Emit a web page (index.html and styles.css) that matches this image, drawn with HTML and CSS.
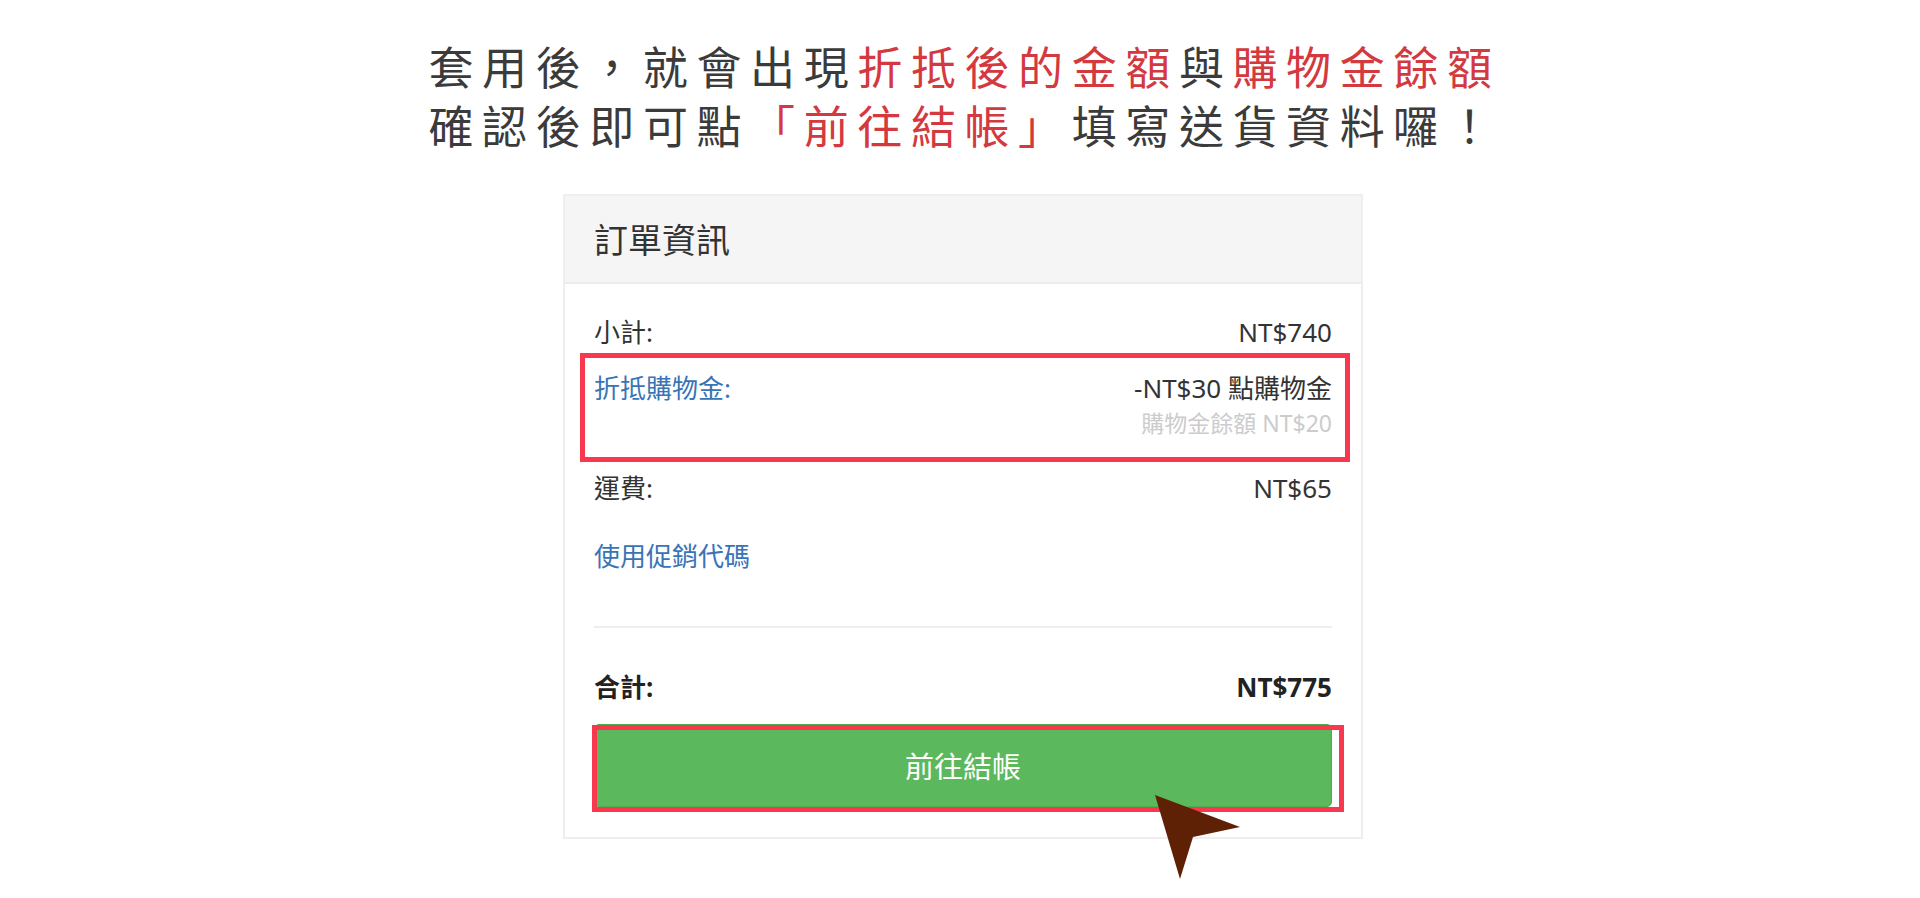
FILE: index.html
```html
<!DOCTYPE html>
<html lang="zh-Hant">
<head>
<meta charset="utf-8">
<title>訂單資訊</title>
<link rel="stylesheet" href="styles.css">
</head>
<body>
<div class="page">
  <div class="title">
    <div class="title-line">套用後，就會出現<span class="hl">折抵後的金額</span>與<span class="hl">購物金餘額</span></div>
    <div class="title-line">確認後即可點<span class="hl">「前往結帳」</span>填寫送貨資料囉！</div>
  </div>

  <div class="card-wrap">
    <div class="card">
      <div class="card-header">訂單資訊</div>
      <div class="card-body">
        <div class="row row-subtotal">
          <span class="label">小計:</span>
          <span class="value">NT$740</span>
        </div>
        <div class="row row-credit">
          <span class="label link">折抵購物金:</span>
          <div class="value-stack">
            <span class="value">-NT$30 點購物金</span>
            <span class="sub">購物金餘額 NT$20</span>
          </div>
        </div>
        <div class="row row-shipping">
          <span class="label">運費:</span>
          <span class="value">NT$65</span>
        </div>
        <div class="row row-promo">
          <span class="label link">使用促銷代碼</span>
        </div>
        <div class="divider"></div>
        <div class="row row-total">
          <span class="label">合計:</span>
          <span class="value">NT$775</span>
        </div>
        <div class="btn">前往結帳</div>
      </div>

      <div class="mark mark-credit"></div>
      <div class="mark mark-btn"></div>
      <svg class="cursor" width="95" height="95" viewBox="0 0 95 95">
        <polygon points="5,5 90,37 43,47 30,89" fill="#5e2106"/>
      </svg>
    </div>
  </div>
</div>
</body>
</html>
```

FILE: styles.css
```css
* { box-sizing: border-box; }

html, body {
  margin: 0;
  padding: 0;
  background: #ffffff;
}

body {
  font-family: "Noto Sans", "Noto Sans CJK TC", sans-serif;
  color: #333333;
}

.page {
  width: 1920px;
  height: 898px;
  overflow: hidden;
}

.title {
  padding-top: 36px;
  text-align: center;
  font-family: "Noto Sans CJK TC", sans-serif;
  font-size: 45px;
  font-weight: 400;
  line-height: 59px;
  letter-spacing: 8.6px;
  color: #3b3b3b;
  padding-left: 9px;
}

.title-line {
  white-space: nowrap;
}

.hl {
  color: #d3393e;
}

.card-wrap {
  display: flex;
  justify-content: center;
  padding-left: 6px;
  margin-top: 40px;
}

.card {
  position: relative;
  width: 800px;
  border: 2px solid #eeeeee;
  background: #ffffff;
}

.card-header {
  height: 88px;
  background: #f5f5f5;
  border-bottom: 2px solid #ececec;
  padding-left: 29px;
  display: flex;
  align-items: center;
  font-family: "Noto Sans CJK TC", sans-serif;
  font-size: 34px;
  color: #333333;
  padding-bottom: 2px;
}

.card-body {
  padding: 30px 29px 30px 29px;
  display: flex;
  flex-direction: column;
}

.row {
  display: flex;
  justify-content: space-between;
  align-items: flex-start;
  font-size: 26px;
  line-height: 36px;
}

.label {
  color: #333333;
}

.link {
  color: #3874b6;
}

.value {
  color: #333333;
}

.value-stack {
  display: flex;
  flex-direction: column;
  align-items: flex-end;
}

.sub {
  font-size: 23px;
  line-height: 35px;
  color: #cccccc;
}

.row-credit { margin-top: 20px; }
.row-shipping { margin-top: 29px; }
.row-promo { margin-top: 32px; }

.divider {
  height: 2px;
  background: #eeeeee;
  margin-top: 52px;
}

.row-total {
  margin-top: 41px;
  font-weight: 700;
}

.row-total .label,
.row-total .value {
  color: #222222;
}

.btn {
  margin-top: 19px;
  height: 83px;
  background: #5cb85c;
  border: 1px solid #4cae4c;
  border-radius: 5px;
  display: flex;
  align-items: center;
  justify-content: center;
  font-family: "Noto Sans CJK TC", sans-serif;
  font-size: 29px;
  color: #ffffff;
  padding-bottom: 2px;
}

.mark {
  position: absolute;
  border: 5px solid #f7384e;
}

.mark-credit {
  left: 15px;
  top: 157px;
  width: 770px;
  height: 109px;
}

.mark-btn {
  left: 27px;
  top: 529px;
  width: 752px;
  height: 87px;
}

.cursor {
  position: absolute;
  left: 585px;
  top: 594px;
}
```
